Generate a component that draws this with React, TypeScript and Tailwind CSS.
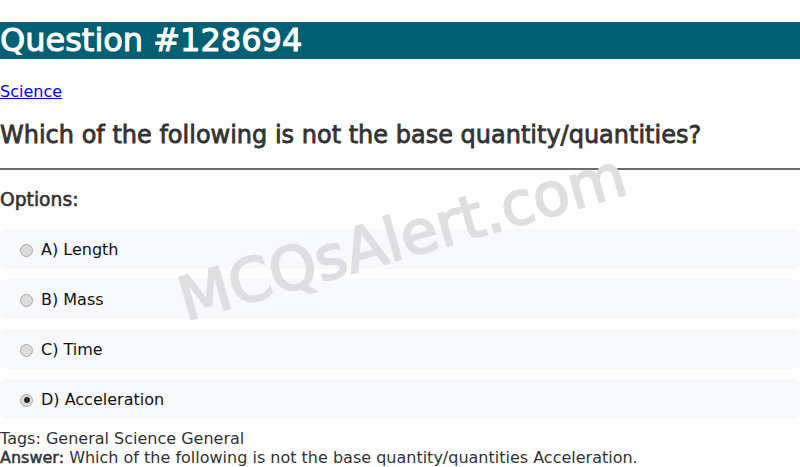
import React from 'react';

const options = [
  { key: 'A', text: 'Length', checked: false },
  { key: 'B', text: 'Mass', checked: false },
  { key: 'C', text: 'Time', checked: false },
  { key: 'D', text: 'Acceleration', checked: true },
];

function Radio({ checked }: { checked: boolean }) {
  return (
    <span className="ml-[5px] mr-[8px] mt-[1px] flex h-[13px] w-[13px] shrink-0 items-center justify-center rounded-full border border-[#a9a9a9] bg-[#dcdcdc]">
      {checked && <span className="h-[6px] w-[6px] rounded-full bg-[#2a2a2a]" />}
    </span>
  );
}

export default function App() {
  return (
    <div className="relative min-h-[467px] overflow-hidden bg-white font-['DejaVu_Sans',sans-serif] text-[#333]">
      <h1 className="mt-[22px] bg-[#005f73] text-[32px] font-normal leading-[37px] text-white [-webkit-text-stroke:1px_currentColor]">
        Question #128694
      </h1>

      <p className="mt-[23px] text-[16px] leading-[19px]">
        <a href="#" className="text-[#0000ee] underline">Science</a>
      </p>

      <h2 className="mt-[20px] text-[24px] font-normal leading-[28px] text-[#333] [-webkit-text-stroke:0.8px_currentColor]">
        Which of the following is not the base quantity/quantities?
      </h2>

      <div className="mt-[19px] h-[2px] bg-[#6e6e6e]" />

      <h3 className="mt-[19px] text-[18.72px] font-normal leading-[22px] text-[#333] [-webkit-text-stroke:0.6px_currentColor]">Options:</h3>

      <div className="mt-[18px] flex flex-col gap-[10px]">
        {options.map((o) => (
          <div key={o.key} className="flex h-[40px] items-center rounded-[6px] bg-[#f8f9fc] pl-[15px] pt-[1px] text-[16px] text-[#111]">
            <Radio checked={o.checked} />
            <span>
              {o.key}) {o.text}
            </span>
          </div>
        ))}
      </div>

      <div className="mt-[10px] text-[16px] leading-[19px] text-[#333]">
        <p>Tags: General Science General</p>
        <p>
          <span className="[-webkit-text-stroke:0.5px_currentColor]">Answer:</span> Which of the following is not the base quantity/quantities Acceleration.
        </p>
      </div>

      <div className="pointer-events-none absolute left-[402px] top-[237px] -translate-x-1/2 -translate-y-1/2 -rotate-[16deg] whitespace-nowrap text-[60px] font-normal text-[#dfdfe1] [-webkit-text-stroke:2px_#dfdfe1]">
        MCQsAlert.com
      </div>
    </div>
  );
}
